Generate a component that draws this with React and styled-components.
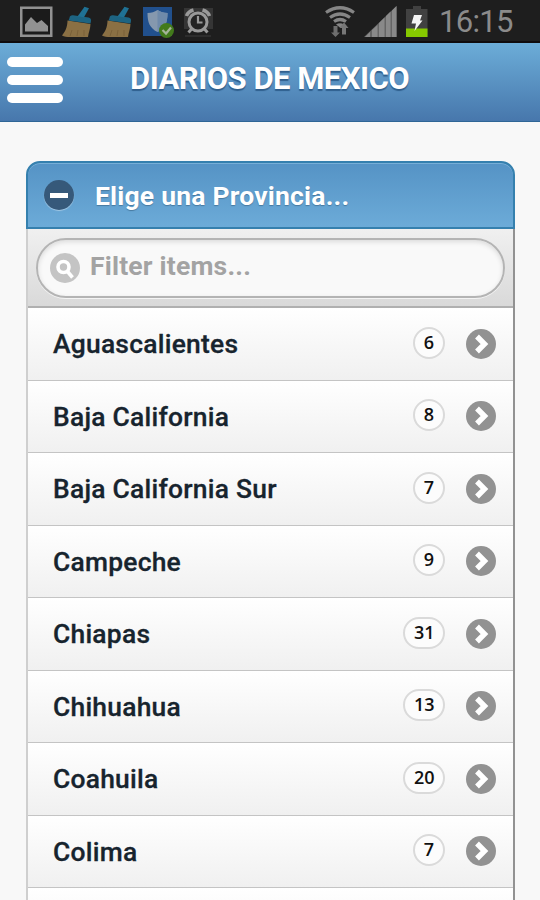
import React from 'react';
import styled, { createGlobalStyle } from 'styled-components';

const PROVINCES = [
  { name: 'Aguascalientes', count: 6 },
  { name: 'Baja California', count: 8 },
  { name: 'Baja California Sur', count: 7 },
  { name: 'Campeche', count: 9 },
  { name: 'Chiapas', count: 31 },
  { name: 'Chihuahua', count: 13 },
  { name: 'Coahuila', count: 20 },
  { name: 'Colima', count: 7 },
];

const App = () => {
  return (
    <Screen>
      <GlobalStyle />
      <StatusBar>
        <Notifications>
          <PictureIcon />
          <BroomIcon />
          <BroomIcon />
          <ShieldIcon />
          <AlarmIcon />
        </Notifications>
        <SystemIcons>
          <WifiIcon />
          <SignalIcon />
          <BatteryIcon />
          <Clock>16:15</Clock>
        </SystemIcons>
      </StatusBar>

      <Header>
        <MenuButton aria-label="Menu">
          <MenuLine />
          <MenuLine />
          <MenuLine />
        </MenuButton>
        <Title>DIARIOS DE MEXICO</Title>
      </Header>

      <Panel>
        <PanelHeading>
          <CollapseIcon>
            <Minus />
          </CollapseIcon>
          <HeadingText>Elige una Provincia...</HeadingText>
        </PanelHeading>
        <PanelBody>
          <FilterBar>
            <SearchField>
              <SearchIcon />
              <SearchInput placeholder="Filter items..." />
            </SearchField>
          </FilterBar>
          <List>
            {PROVINCES.map(({ name, count }) => (
              <Row key={name}>
                <RowName>{name}</RowName>
                <Count>{count}</Count>
                <ArrowIcon />
              </Row>
            ))}
            <Row />
          </List>
        </PanelBody>
      </Panel>
    </Screen>
  );
};

const PictureIcon = () => (
  <svg width="33" height="31" viewBox="0 0 33 31">
    <rect x="1.25" y="1.75" width="30" height="28" fill="#1b1b1b" stroke="#929292" strokeWidth="2.5" />
    <path d="M5 25.500V18.500l6-7.500 6 6 4.500-3 6.500 6v5.500z" fill="#929292" />
  </svg>
);

const BroomIcon = () => (
  <svg width="31" height="32" viewBox="0 0 31 32">
    <path d="M5.500 14.500C5.500 21 3 26 0 29.500c2 1 5 1.500 8 1.500h18c.5-4 2.500-9 2.500-13z" fill="#8a7044" />
    <path d="M10 24l-2 6M16 24l-1 6M22 24v6" stroke="#7a6139" strokeWidth="1" fill="none" />
    <path d="M7.500 12c0-2 1.500-3 3.500-2.800l15.500 2.300c2 .4 2.800 1.500 2.500 3.500l-.5 2.500L6.500 14.500z" fill="#1d6482" />
    <path d="M15.500 10.500L22.500 .8l4.500 1.500-5 9z" fill="#1f7194" />
  </svg>
);

const ShieldIcon = () => (
  <svg width="33" height="32" viewBox="0 0 33 32">
    <rect x="1" y="1" width="29" height="29" fill="#21508d" />
    <path d="M15.500 4c3 2 6 3 10 3 0 9-2 15-10 19C7.500 22 5.500 16 5.500 7c4 0 7-1 10-3z" fill="#8598ae" />
    <path d="M15.500 4c3 2 6 3 10 3 0 9-2 15-10 19z" fill="#6f8aaa" />
    <circle cx="24.500" cy="24.500" r="7.500" fill="#427a1b" />
    <path d="M20.500 24l3.500 3.500 5-6" stroke="#a5b598" strokeWidth="2.200" fill="none" />
  </svg>
);

const AlarmIcon = () => (
  <svg width="31" height="31" viewBox="0 0 31 31">
    <path d="M0 2h29v21H0z" fill="#353535" />
    <circle cx="14" cy="16" r="9" fill="#242424" stroke="#999" strokeWidth="3" />
    <path d="M14 10v6.500h4.500" stroke="#999" strokeWidth="2.200" fill="none" />
    <path d="M2.500 10Q4 5.500 9.500 4M25.500 10Q24 5.500 18.500 4" stroke="#999" strokeWidth="3.500" fill="none" />
    <path d="M8 22.500l-3.500 4M20 22.500l3.500 4" stroke="#999" strokeWidth="3" />
    <path d="M1 30h26" stroke="#3d3d3d" strokeWidth="1" />
  </svg>
);

const WifiIcon = () => (
  <svg width="30" height="32" viewBox="0 0 30 32">
    <g fill="none" stroke="#858585" strokeWidth="3.200">
      <path d="M1 6.500Q15-3 29 6.500" />
      <path d="M5 11.500q10-7 20 0" />
      <path d="M9 15.500q6-4 12 0" />
    </g>
    <path d="M11 18.500q4-2.500 8 0l-4 3z" fill="#858585" />
    <path d="M8.500 20h4v6.500H15L10.500 31 6 26.500h2.500z" fill="#6e6e6e" />
    <path d="M17 28.500V22h-2.500l4.500-5.500 4.500 5.500H21v6.500z" fill="#777" />
  </svg>
);

const SignalIcon = () => (
  <svg width="33" height="31" viewBox="0 0 33 31">
    <path d="M0 31L32.500 0v31z" fill="#656565" />
    <path d="M1 31l5-5v5zM8 24l5.500-5v12H8zM15 17l5.500-5.500V31H15zM22 10l4.500-4.500V31H22zM28 4.500L32.500 0v31H28z" fill="#898989" />
  </svg>
);

const BatteryIcon = () => (
  <svg width="22" height="31" viewBox="0 0 22 31">
    <path d="M7 0h8v3h6.500v28H0V3h7z" fill="#414141" />
    <path d="M0 22.500h21.500V31H0z" fill="#86c900" />
    <path d="M8 9h8l-2 5.500h2.500L8.500 25l1.500-7.500H5.500z" fill="#f5f5f5" />
  </svg>
);

const SearchIcon = () => (
  <svg width="30" height="30" viewBox="0 0 30 30">
    <circle cx="15" cy="15" r="15" fill="#c4c4c4" />
    <circle cx="13.500" cy="14" r="5.500" fill="none" stroke="#fff" strokeWidth="3.600" />
    <path d="M17.500 18.500l5 6" stroke="#fff" strokeWidth="3.600" />
  </svg>
);

const ArrowIcon = () => (
  <svg width="30" height="30" viewBox="0 0 30 30">
    <circle cx="15" cy="15" r="15" fill="#929292" />
    <path d="M11 7.500l7.500 7.500-7.500 7.500" fill="none" stroke="#fff" strokeWidth="5.400" />
  </svg>
);

const GlobalStyle = createGlobalStyle`
  *, *::before, *::after {
    box-sizing: border-box;
  }

  body {
    margin: 0;
    overflow: hidden;
    font-family: Roboto, 'Liberation Sans', sans-serif;
  }

  svg {
    display: block;
    flex-shrink: 0;
  }
`;

const Screen = styled.div`
  height: 900px;
  overflow: hidden;
  background: #f8f8f8;
`;

const StatusBar = styled.div`
  display: flex;
  justify-content: space-between;
  height: 43px;
  padding: 6px 26px 0 20px;
  background: #1e1e1e;
  border-bottom: 2px solid #100c0d;
`;

const Notifications = styled.div`
  display: flex;
  gap: 9px;
`;

const SystemIcons = styled.div`
  display: flex;
  gap: 9px;
`;

const Clock = styled.span`
  width: 75px;
  margin-left: 2px;
  font-size: 31px;
  line-height: 31px;
  letter-spacing: -0.7px;
  color: #8b8b8b;
  white-space: nowrap;
`;

const Header = styled.header`
  display: flex;
  height: 79px;
  padding: 14px 7px;
  background: linear-gradient(#6cadd8, #4777ac);
  border-bottom: 1px solid #2f6696;
`;

const MenuButton = styled.button`
  display: flex;
  flex-direction: column;
  gap: 8px;
  width: 56px;
  padding: 0;
  border: none;
  background: none;
`;

const MenuLine = styled.span`
  width: 56px;
  height: 10px;
  border-radius: 5px;
  background: #fff;
`;

const Title = styled.h1`
  margin: 0 0 0 67px;
  font-size: 31px;
  font-weight: 700;
  line-height: 44px;
  letter-spacing: -0.5px;
  color: #fff;
  text-shadow: 0 2px 1px #2f5f8d;
  white-space: nowrap;
`;

const Panel = styled.main`
  margin: 39px 25px 0 26px;
`;

const PanelHeading = styled.div`
  display: flex;
  align-items: center;
  height: 68px;
  padding-left: 16px;
  background: linear-gradient(#5593c5, #6cabd8);
  border: 2px solid #3580ae;
  border-radius: 14px 14px 0 0;
  box-shadow: inset 0 1px 0 #77aed7;
`;

const CollapseIcon = styled.span`
  display: flex;
  align-items: center;
  justify-content: center;
  width: 30px;
  height: 30px;
  border-radius: 50%;
  background: #36597a;
  box-shadow: 0 1px 1px rgba(255, 255, 255, 0.4);
`;

const Minus = styled.span`
  width: 18px;
  height: 5px;
  background: #fff;
`;

const HeadingText = styled.h2`
  margin: 2px 0 0 21px;
  font-size: 26.5px;
  font-weight: 700;
  line-height: 32px;
  letter-spacing: 0.2px;
  color: #fff;
  text-shadow: 0 1px 1px #47799f;
`;

const PanelBody = styled.div`
  border-left: 2px solid #cfcfcf;
  border-right: 2px solid #929292;
`;

const FilterBar = styled.div`
  height: 79px;
  padding: 9px 8px 0;
  background: linear-gradient(#f0f0f0, #d9d9d9);
  border-bottom: 2px solid #b0b0b0;
`;

const SearchField = styled.label`
  display: flex;
  align-items: center;
  height: 60px;
  padding-left: 12px;
  border: 2px solid #b4b4b4;
  border-radius: 30px;
  background: #f9f9f9;
  box-shadow: inset 0 2px 5px rgba(0, 0, 0, 0.12), 0 1px 0 #f4f4f4;
`;

const SearchInput = styled.input`
  flex: 1;
  min-width: 0;
  height: 36px;
  margin: 0 0 5px 10px;
  padding: 0;
  border: none;
  outline: none;
  background: none;
  font: 700 26.5px Roboto, sans-serif;
  letter-spacing: 0.2px;

  &::placeholder {
    color: #a3a3a3;
    opacity: 1;
  }
`;

const List = styled.ul`
  margin: 0;
  padding: 0;
  list-style: none;
`;

const Row = styled.li`
  display: flex;
  align-items: center;
  height: 72.5px;
  padding: 0 17px 0 25px;
  background: linear-gradient(#fff, #f0f0f0);
  border-bottom: 1px solid #c4c4c4;
`;

const RowName = styled.span`
  flex: 1;
  margin-top: 1px;
  font-size: 26.4px;
  font-weight: 500;
  line-height: 32px;
  letter-spacing: 0.25px;
  color: #17242e;
  -webkit-text-stroke: 0.3px #17242e;
`;

const Count = styled.span`
  min-width: 32px;
  height: 32px;
  margin: 0 21px 2px 0;
  padding: 0 8.5px;
  border: 2px solid #dadada;
  border-radius: 16px;
  background: #fcfcfc;
  font-family: 'Open Sans', sans-serif;
  font-size: 18px;
  font-weight: 600;
  line-height: 27px;
  text-align: center;
  color: #111;
`;

export default App;
